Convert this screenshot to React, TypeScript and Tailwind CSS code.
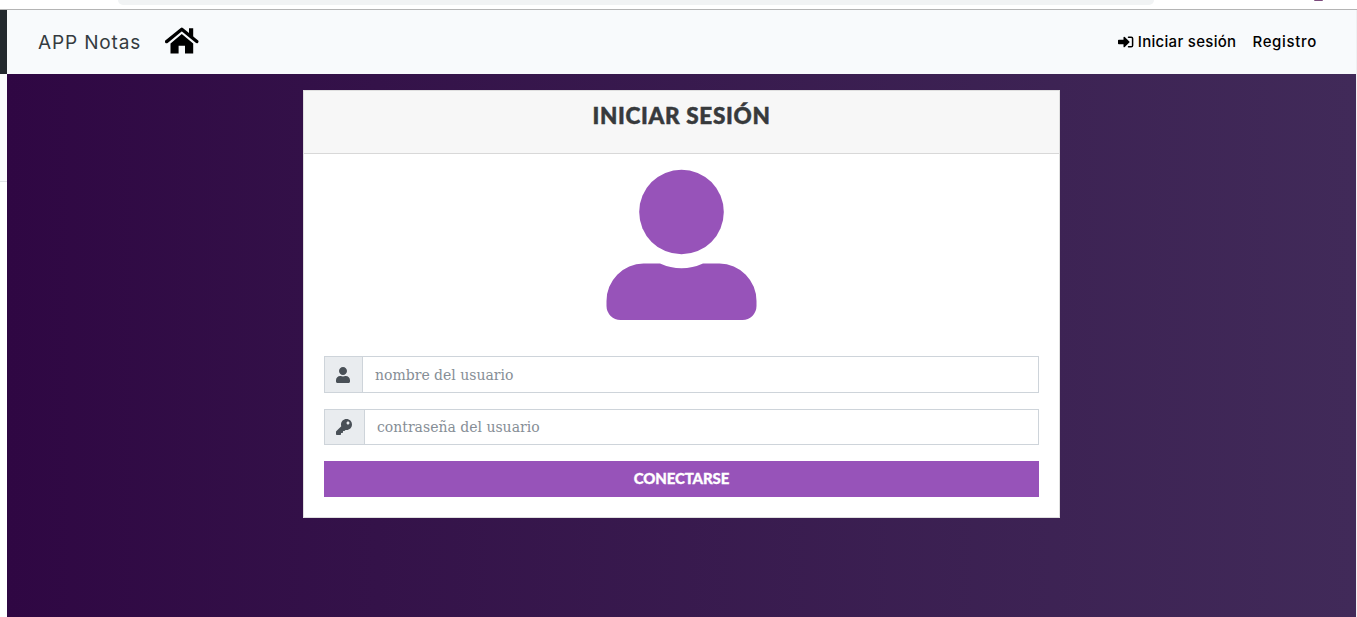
import { FaKey, FaUser } from "react-icons/fa";
import type { ReactNode } from "react";

function Field({ icon, name, placeholder, type, className }: {
  icon: ReactNode; name: string; placeholder: string; type: string; className: string;
}) {
  return (
    <label className={`flex w-full border border-[#ced4da] bg-white ${className}`}>
      <span className="flex items-center border-r border-[#ced4da] bg-[#e9ecef] pr-3 pl-[11px] text-base text-[#495057]">
        {icon}
      </span>
      <input
        name={name}
        type={type}
        placeholder={placeholder}
        className="min-w-0 flex-1 bg-white pt-px pr-3 pl-3 font-['DejaVu_Serif',serif] text-[14px] font-light text-[#495057] outline-none placeholder:text-[#868e96]"
      />
    </label>
  );
}

function Avatar() {
  return (
    <svg viewBox="0.5 0 150 151" className="h-[151px] w-[150px] overflow-visible fill-[#9753b9]" aria-hidden="true">
      <circle cx="75" cy="42" r="42.3" />
      <path d="M37 93.4H53.5Q64 98.2 75 98.2T96.5 93.4H113A37.5 37.5 0 0 1 150 131.1V136.1A14 14 0 0 1 136 150H14A14 14 0 0 1 0 136.1V131.1A37.5 37.5 0 0 1 37 93.4Z" />
    </svg>
  );
}

function HomeIcon() {
  return (
    <svg viewBox="0 0 34 28" className="-mt-0.5 h-7 w-[34px] shrink-0 text-black" aria-hidden="true">
      <path d="M1.6 14.6 16.8 2.2 31.8 14.6" fill="none" stroke="currentColor" strokeWidth="3.3" strokeLinejoin="round" strokeLinecap="round" />
      <path d="M24 1.3H28.2V11L24 7.5Z" fill="currentColor" />
      <path d="M16.8 7.1 28.2 16.5V26.6H20V18.8H13.6V26.6H5.5V16.5Z" fill="currentColor" />
    </svg>
  );
}

function LoginIcon() {
  return (
    <svg viewBox="0 0 16 12" className="h-3 w-4 shrink-0 text-black" aria-hidden="true">
      <path d="M.8 3.8H5.5V1.3Q5.7.2 6.8 1L11.8 6 6.8 11Q5.7 11.8 5.5 10.7V8.2H.8Q0 8.2 0 7.4V4.6Q0 3.8.8 3.8Z" fill="currentColor" />
      <path d="M10.5 1.2H13.2Q14.6 1.2 14.6 2.6V9.4Q14.6 10.8 13.2 10.8H10.5" fill="none" stroke="currentColor" strokeWidth="1.5" strokeLinecap="round" />
    </svg>
  );
}

export default function App() {
  return (
    <div className="flex h-[617px] w-[1357px] flex-col overflow-hidden bg-white">
      <div className="flex h-[10px] shrink-0 items-start border-b border-[#b4b4b4] pl-[118px]">
        <div className="h-[5px] w-[1036px] rounded-b-[10px] bg-[#f1f3f4]" />
        <div className="ml-[160px] h-[1px] w-[9px] rounded-b-full bg-[#7c4b7d]" />
      </div>
      <div className="flex min-h-0 flex-1">
        <aside className="flex w-[7px] shrink-0 flex-col">
          <div className="h-16 bg-[#24292e]" />
          <div className="h-[108px] border-b border-[#e1e4e8] bg-[#fafbfc]" />
        </aside>
        <div className="flex w-[1349px] shrink-0 flex-col">
          <header className="flex h-16 shrink-0 items-center bg-[#f8fafc] pr-[39px] pl-[31px] font-['Inter',sans-serif]">
            <span className="w-[127px] pt-0.5 text-[19px] tracking-[0.045em] whitespace-nowrap text-[#343a40]">APP Notas</span>
            <HomeIcon />
            <nav className="ml-auto flex items-center gap-4 text-[15px] font-medium text-black">
              <a className="flex items-center gap-1 tracking-[0.02em] whitespace-nowrap"><LoginIcon /><span>Iniciar sesión</span></a>
              <a className="tracking-[0.045em]">Registro</a>
            </nav>
          </header>
          <main className="flex flex-1 items-start bg-linear-to-r from-[#2f0743] to-[#412a59] pt-4 pl-[296px]">
            <section className="flex h-[428px] w-[757px] flex-col border border-[#dfdfdf] bg-white">
              <h1 className="flex h-[63px] shrink-0 justify-center border-b border-[#d8d8d8] bg-[#f7f7f7] pt-2 font-['Lato',sans-serif] text-[22.5px] leading-[34px] font-black tracking-[0.03em] text-[#373a3c] [-webkit-text-stroke:0.5px_#373a3c]">
                INICIAR SESIÓN
              </h1>
              <form className="flex flex-col items-center px-5 pt-4">
                <Avatar />
                <Field icon={<FaUser className="h-4 w-[14px]" />} name="user" type="text" placeholder="nombre del usuario" className="mt-[35px] h-[37px]" />
                <Field icon={<FaKey className="size-4" />} name="password" type="password" placeholder="contraseña del usuario" className="mt-4 h-9" />
                <button type="button" className="mt-4 h-9 w-full bg-[#9753b9] pb-px font-['Lato',sans-serif] text-[15px] font-black tracking-[-0.01em] text-white [-webkit-text-stroke:0.3px_white]">
                  CONECTARSE
                </button>
              </form>
            </section>
          </main>
        </div>
        <div className="w-px bg-[#eff0f2]" />
      </div>
    </div>
  );
}
